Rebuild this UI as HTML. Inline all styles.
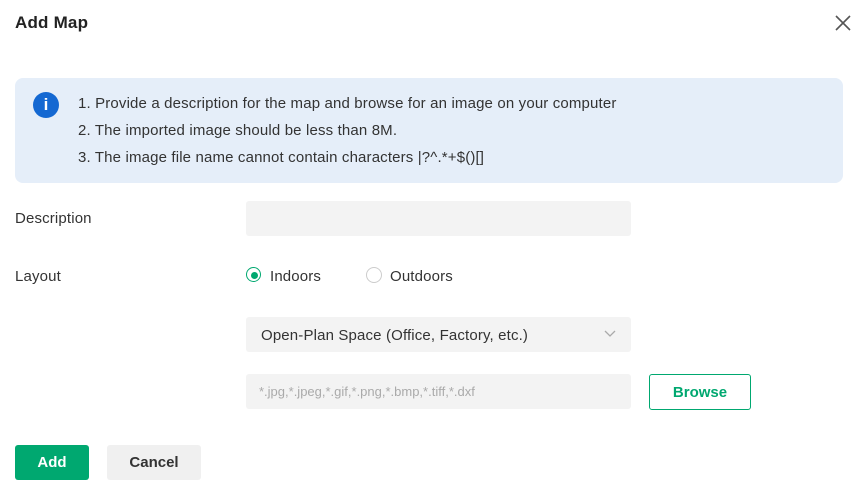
<!DOCTYPE html>
<html><head><style>
body{margin:0;width:864px;height:496px;background:#fff;font-family:"Liberation Sans",sans-serif;position:relative;overflow:hidden;color:#333}
.a{position:absolute}
.t{font-size:15px;line-height:16px;letter-spacing:0.15px}
</style></head><body>
<div class="a" style="left:15px;top:13px;font-size:17px;font-weight:bold;color:#222;letter-spacing:0.2px">Add Map</div>
<svg class="a" style="left:835px;top:15px" width="16" height="16"><path d="M1 1L15 15M15 1L1 15" stroke="#555" stroke-width="1.6"/></svg>
<div class="a" style="left:15px;top:78px;width:828px;height:105px;background:#e5eef9;border-radius:8px"></div>
<div class="a" style="left:33px;top:92px;width:26px;height:26px;border-radius:50%;background:#1468d2;color:#fff;text-align:center;font-weight:bold;font-size:17px;line-height:26px">i</div>
<div class="a t" style="left:78px;top:96px">1. Provide a description for the map and browse for an image on your computer</div>
<div class="a t" style="left:78px;top:123px">2. The imported image should be less than 8M.</div>
<div class="a t" style="left:78px;top:150px">3. The image file name cannot contain characters |?^.*+$()[]</div>
<div class="a t" style="left:15px;top:211px">Description</div>
<div class="a" style="left:246px;top:201px;width:385px;height:35px;background:#f3f3f3;border-radius:3px"></div>
<div class="a t" style="left:15px;top:269px">Layout</div>
<div class="a" style="left:246px;top:267px;width:13px;height:13px;border:1.5px solid #00a870;border-radius:50%"></div>
<div class="a" style="left:250.5px;top:271.5px;width:7px;height:7px;background:#00a870;border-radius:50%"></div>
<div class="a t" style="left:270px;top:269px">Indoors</div>
<div class="a" style="left:366px;top:267px;width:14px;height:14px;border:1px solid #ccc;border-radius:50%"></div>
<div class="a t" style="left:390px;top:269px">Outdoors</div>
<div class="a" style="left:246px;top:317px;width:385px;height:35px;background:#f3f3f3;border-radius:3px"></div>
<div class="a" style="left:261px;top:327px;font-size:15px;color:#333;letter-spacing:0.15px">Open-Plan Space (Office, Factory, etc.)</div>
<svg class="a" style="left:604px;top:330px" width="12" height="8"><path d="M1 1L6 6L11 1" stroke="#aaa" fill="none" stroke-width="1.3"/></svg>
<div class="a" style="left:246px;top:374px;width:385px;height:35px;background:#f3f3f3;border-radius:3px"></div>
<div class="a" style="left:259px;top:384px;font-size:13px;color:#aaa">*.jpg,*.jpeg,*.gif,*.png,*.bmp,*.tiff,*.dxf</div>
<div class="a" style="left:649px;top:374px;width:100px;height:34px;border:1px solid #00a870;border-radius:3px;color:#00a870;font-weight:bold;font-size:15px;text-align:center;line-height:36px">Browse</div>
<div class="a" style="left:15px;top:445px;width:74px;height:35px;background:#00a870;border-radius:3px;color:#fff;font-weight:bold;font-size:15px;text-align:center;line-height:36px">Add</div>
<div class="a" style="left:107px;top:445px;width:94px;height:35px;background:#f0f0f0;border-radius:3px;color:#333;font-weight:bold;font-size:15px;text-align:center;line-height:36px">Cancel</div>
</body></html>
